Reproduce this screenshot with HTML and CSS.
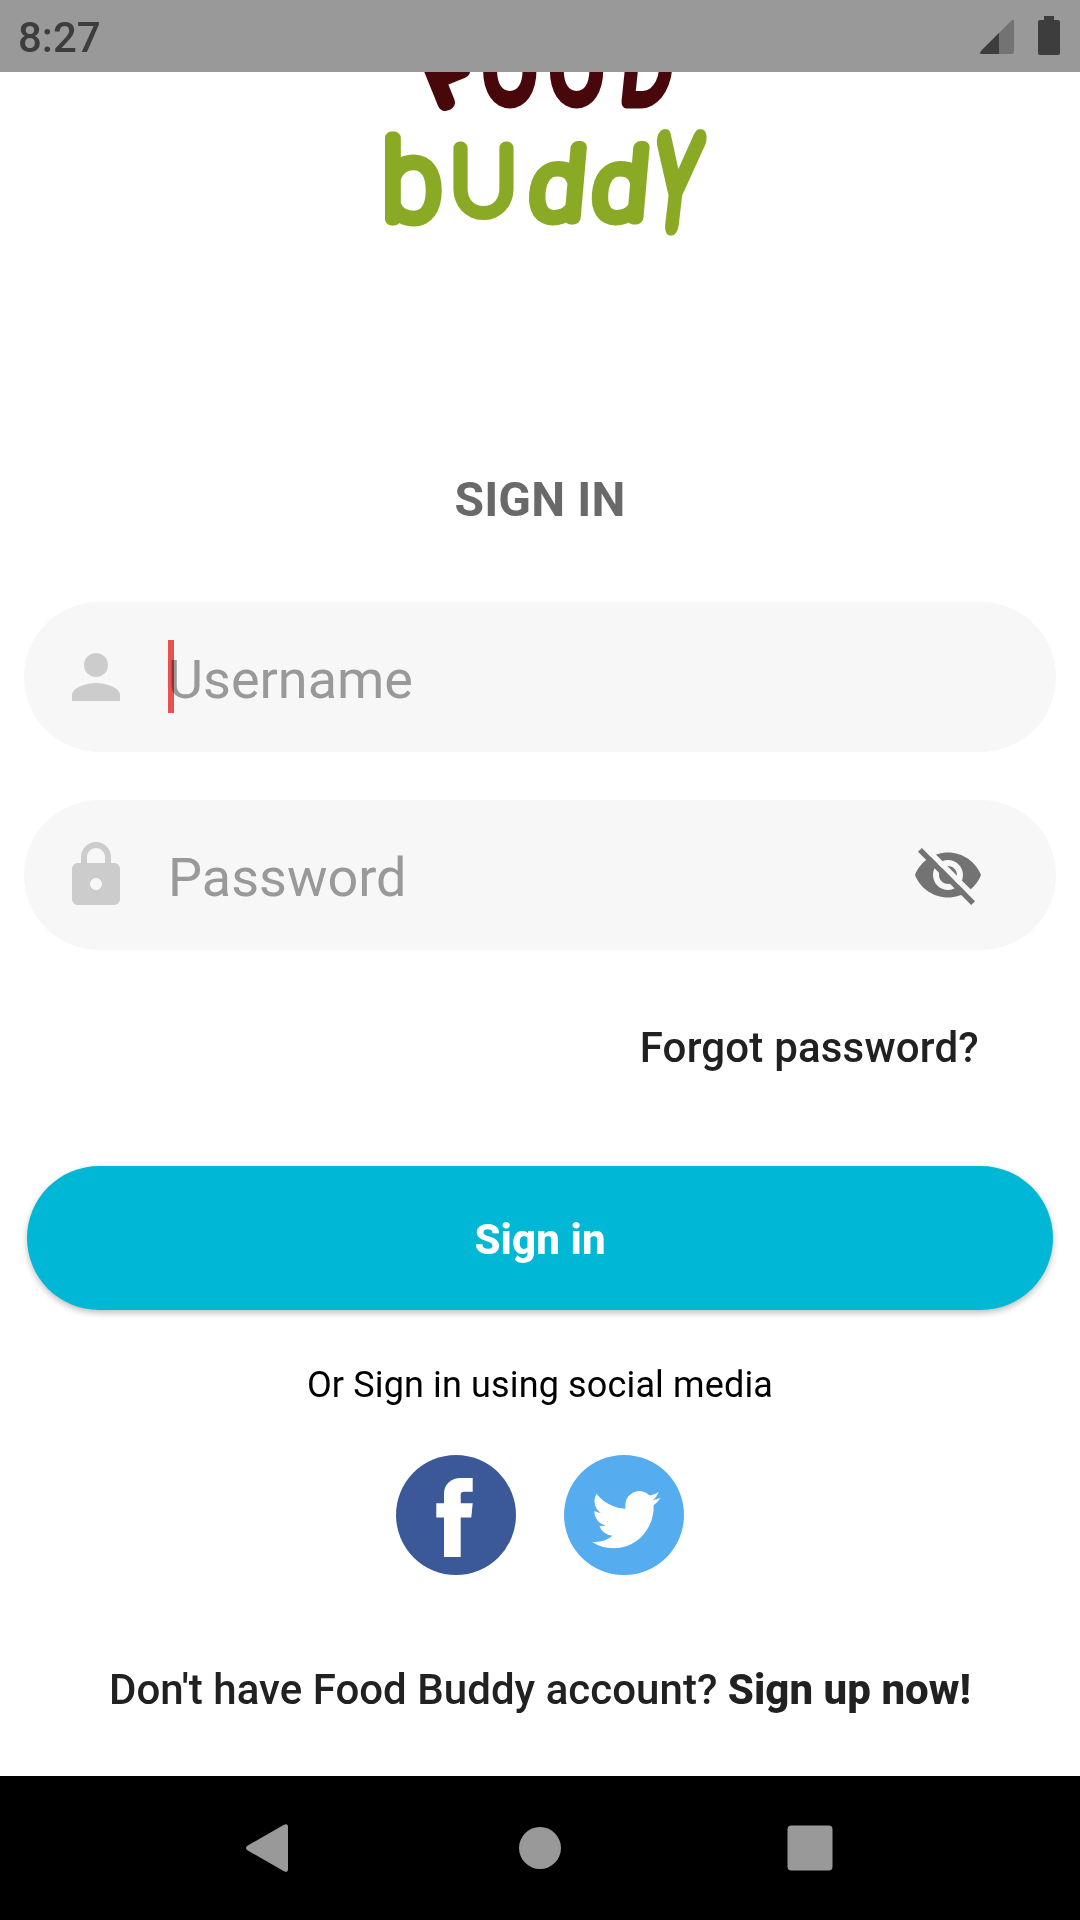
FILE: index.html
```html
<!DOCTYPE html>
<html lang="en">
<head>
<meta charset="utf-8">
<title>Food Buddy</title>
<link rel="stylesheet" href="styles.css">
</head>
<body>
<header class="status">
  <span class="clock">8:27</span>
  <svg class="status-icons" width="100" height="72" viewBox="0 0 100 72">
    <path fill="#737373" d="M34 22 Q34 18 31 21 L1 51 Q-1 54 2 54 H32 Q34 54 34 52Z"/>
    <path fill="#3d3d3d" d="M19 33 L1 51 Q-1 54 2 54 H19Z"/>
    <path fill="#3d3d3d" d="M64 16 h10 v4 h4 q2 0 2 2 v31 q0 2 -2 2 h-18 q-2 0 -2 -2 v-31 q0 -2 2 -2 h4z"/>
  </svg>
</header>
<main class="page">
  <svg class="logo" width="360" height="190" viewBox="0 0 360 190" aria-label="Food Buddy">
    <g class="food">
      <text transform="translate(79 34) rotate(-22) scale(1.05 1)" font-size="68">F</text>
      <text transform="translate(124 28) scale(.79 1)" font-size="98">O</text>
      <text transform="translate(190.700 28) scale(.79 1)" font-size="98">O</text>
      <text transform="translate(260 29) skewX(-6) scale(.75 1)" font-size="98">D</text>
    </g>
    <g class="buddy">
      <text transform="translate(22.500 147)" font-size="108">b</text>
      <text class="round" transform="translate(90 141)" font-size="93">U</text>
      <text transform="translate(168 146) skewX(-5) scale(1.05 1)" font-size="94">d</text>
      <text transform="translate(230.700 146) skewX(-5) scale(1.05 1)" font-size="94">d</text>
      <text class="wide" transform="translate(292 153) skewX(-6.500) scale(.56 1)" font-size="120">Y</text>
    </g>
  </svg>
  <h1 class="title">SIGN IN</h1>
  <div class="field">
    <svg class="lead" viewBox="0 0 24 24"><circle cx="12" cy="8" r="4"/><path d="M12 14c-2.67 0-8 1.34-8 4v2h16v-2c0-2.66-5.33-4-8-4z"/></svg>
    <span class="hint"><span class="label">Username</span><i class="caret"></i></span>
  </div>
  <div class="field">
    <svg class="lead" viewBox="0 0 24 24"><path d="M18 8h-1V6c0-2.76-2.24-5-5-5S7 3.24 7 6v2H6c-1.1 0-2 .9-2 2v10c0 1.1.9 2 2 2h12c1.1 0 2-.9 2-2V10c0-1.1-.9-2-2-2zm-6 9c-1.1 0-2-.9-2-2s.9-2 2-2 2 .9 2 2-.9 2-2 2zm3-9H9V6c0-1.66 1.34-3 3-3s3 1.34 3 3v2z"/></svg>
    <span class="hint"><span class="label">Password</span></span>
    <svg class="eye" viewBox="0 0 24 24">
      <path fill="#737373" d="M12 4.5C7 4.5 2.73 7.61 1 12c1.73 4.39 6 7.5 11 7.5s9.27-3.11 11-7.5c-1.73-4.39-6-7.5-11-7.5zM12 17c-2.76 0-5-2.24-5-5s2.24-5 5-5 5 2.24 5 5-2.24 5-5 5zm0-8c-1.66 0-3 1.34-3 3s1.34 3 3 3 3-1.34 3-3-1.34-3-3-3z"/>
      <path fill="#f7f7f7" d="M3.27 3L21 20.73l1.27-1.27L4.54 1.73z"/>
      <path fill="#737373" d="M2 4.27L19.73 22 21 20.73 3.27 3z"/>
    </svg>
  </div>
  <div class="forgot">Forgot password?</div>
  <div class="button">Sign in</div>
  <div class="or">Or Sign in using social media</div>
  <div class="social">
    <svg width="120" height="120" viewBox="0 0 120 120"><circle cx="60" cy="60" r="60" fill="#3b5998"/><path fill="#fff" d="M76.7 23H65C54 23 48 30 48 39v9.3h-7.7v14.2H48V102h16.7V62.5h10.6l1.4-14.2h-12V40q0-3.3 3.3-3.3h8.7z"/></svg>
    <svg width="120" height="120" viewBox="0 0 120 120"><circle cx="60" cy="60" r="60" fill="#55acee"/><path fill="#fff" transform="translate(27.7 29.4) scale(2.875 2.93)" d="M23.95 4.57a10 10 0 0 1-2.82.77 4.96 4.96 0 0 0 2.16-2.72c-.95.56-2 .96-3.13 1.18a4.92 4.92 0 0 0-8.38 4.48C7.69 8.09 4.07 6.13 1.64 3.16a4.92 4.92 0 0 0 1.52 6.57 4.9 4.9 0 0 1-2.23-.61v.06a4.92 4.92 0 0 0 3.95 4.83 5 5 0 0 1-2.21.08 4.94 4.94 0 0 0 4.6 3.42A9.87 9.87 0 0 1 0 19.54a14 14 0 0 0 7.55 2.21c9.05 0 14-7.5 14-13.98 0-.21 0-.42-.02-.63a9.94 9.94 0 0 0 2.46-2.55z"/></svg>
  </div>
  <div class="signup">Don't have Food Buddy account? <b>Sign up now!</b></div>
</main>
<nav class="nav">
  <svg width="1080" height="144" viewBox="0 0 1080 144" fill="#999">
    <path d="M247 70L284 48.700Q288 47 288 51V93Q288 97 284 95.300L247 74Q245 72 247 70Z"/>
    <circle cx="540" cy="72" r="21"/>
    <rect x="787.500" y="49.500" width="45" height="45" rx="4"/>
  </svg>
</nav>
</body>
</html>
```
FILE: styles.css
```css
body { margin: 0; width: 1080px; height: 1920px; display: flex; flex-direction: column; overflow: hidden; background: #fff; font-family: Roboto, sans-serif; color: #212121; }
.status { flex: none; height: 72px; display: flex; align-items: center; justify-content: space-between; background: #999; padding: 0 0 0 18px; box-sizing: border-box; }
.clock { padding-top: 3px; font-size: 42px; font-weight: 500; line-height: 72px; color: #3d3d3d; }
.status-icons { display: block; }
.page { flex: none; height: 1704px; display: flex; flex-direction: column; }
.logo { display: block; flex: none; align-self: center; }
.logo text { font-family: Roboto, sans-serif; font-weight: 100; stroke-linejoin: round; }
.logo .round { font-family: Lato, sans-serif; }
.food { fill: #48070b; stroke: #48070b; stroke-width: 15px; }
.buddy { fill: #8aaa26; stroke: #8aaa26; stroke-width: 13px; }
.buddy .wide { stroke-width: 21px; }
.title { margin: 206px 0 0; height: 64px; line-height: 64px; font-size: 48px; font-weight: 700; letter-spacing: .15px; text-align: center; color: #696969; }
.field { flex: none; display: flex; align-items: center; height: 150px; margin: 48px 24px 0; padding: 0 72px 0 36px; box-sizing: border-box; border-radius: 75px; background: #f7f7f7; }
.title + .field { margin-top: 70px; }
.lead { width: 72px; height: 72px; fill: #ccc; }
.hint { position: relative; flex: 1; margin-left: 36px; padding-top: 5px; font-size: 54px; line-height: 72px; color: #999; }
.caret { position: absolute; left: 0; top: 1px; width: 6px; height: 73px; background: #ef5350; mix-blend-mode: multiply; }
.eye { width: 72px; height: 72px; }
.forgot { margin: 73px 101px 0 0; height: 50px; line-height: 50px; font-size: 42px; font-weight: 500; letter-spacing: .2px; text-align: right; }
.button { flex: none; margin: 93px 27px 0; height: 144px; line-height: 148px; border-radius: 72px; background: #00b8d6; color: #fff; font-size: 42px; font-weight: 800; letter-spacing: .1px; text-align: center; box-shadow: 0 3px 6px rgba(0,0,0,.25); }
.or { margin-top: 50px; height: 50px; line-height: 50px; font-size: 36px; letter-spacing: .14px; text-align: center; color: #000; }
.social { display: flex; justify-content: center; gap: 48px; margin-top: 45px; }
.signup { margin-top: 90px; height: 50px; line-height: 50px; font-size: 42px; font-weight: 500; letter-spacing: .03px; text-align: center; }
.signup b { font-weight: 800; }
.nav { flex: none; height: 144px; background: #000; }
.nav svg { display: block; }
```
